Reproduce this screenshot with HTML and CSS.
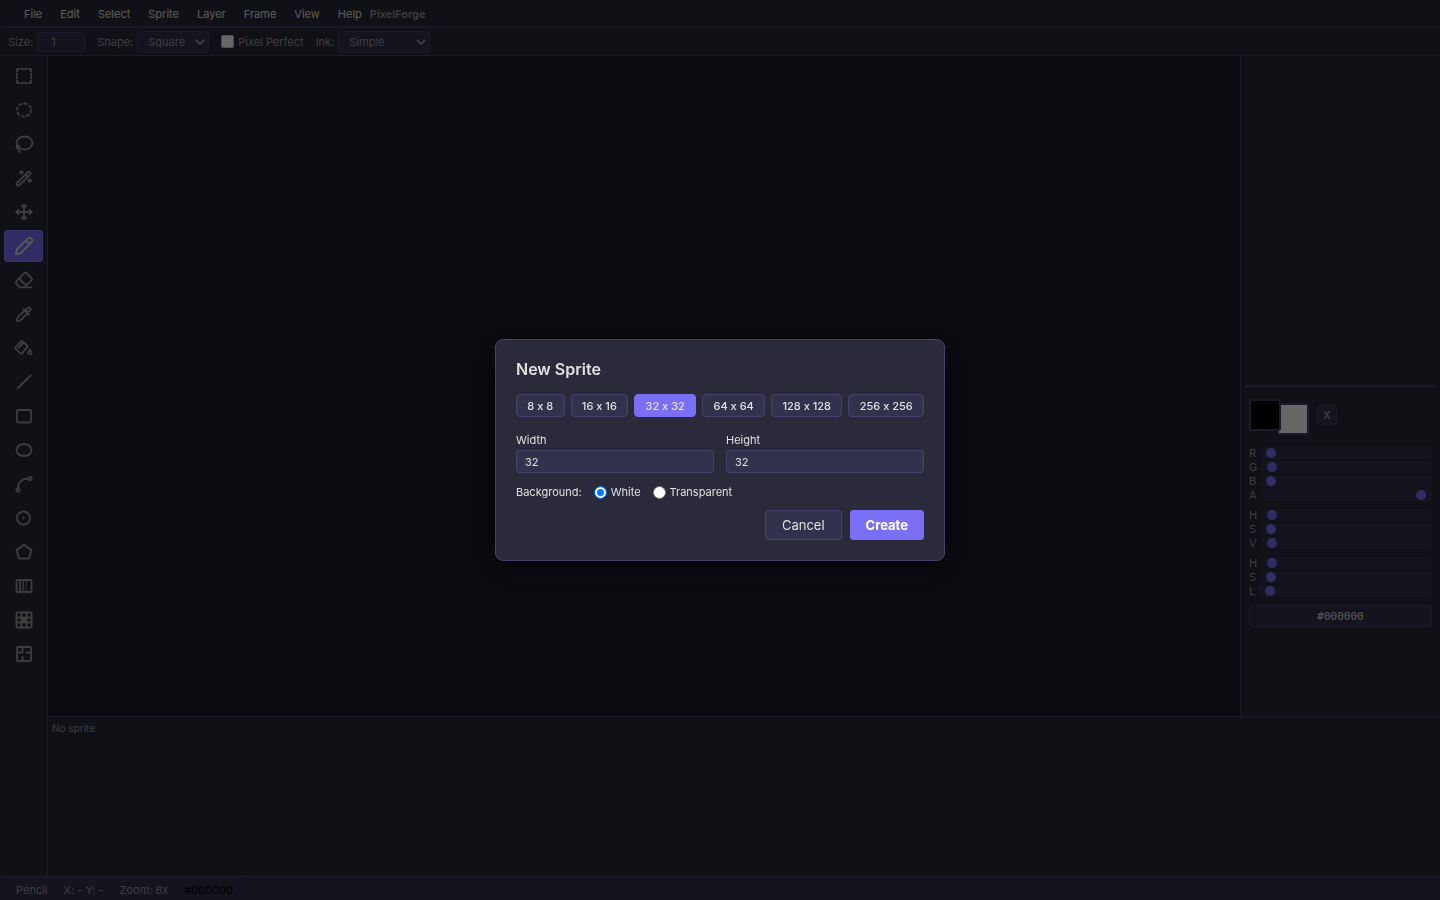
FILE: index.html
```html
<!DOCTYPE html>
<html lang="en">
<head>
    <meta charset="UTF-8">
    <meta name="viewport" content="width=device-width, initial-scale=1.0">
    <title>PixelForge</title>
    <link rel="stylesheet" href="styles.css">
</head>
<body>
    <div class="app">
        <header class="menubar">
            <nav class="menus">
                <button type="button">File</button>
                <button type="button">Edit</button>
                <button type="button">Select</button>
                <button type="button">Sprite</button>
                <button type="button">Layer</button>
                <button type="button">Frame</button>
                <button type="button">View</button>
                <button type="button">Help</button>
                <span class="brand">PixelForge</span>
            </nav>
        </header>

        <div class="options">
            <div class="option">
                <label for="brushSize">Size:</label>
                <input type="text" id="brushSize" class="size-input" value="1">
            </div>
            <div class="option">
                <label for="brushShape">Shape:</label>
                <span class="select-wrap">
                    <select id="brushShape" class="shape-select"><option>Square</option><option>Circle</option></select>
                    <svg class="chevron" viewBox="0 0 10 6"><path d="M1 1l4 4 4-4"/></svg>
                </span>
            </div>
            <div class="option">
                <input type="checkbox" id="pixelPerfect" class="check">
                <label for="pixelPerfect">Pixel Perfect</label>
            </div>
            <div class="option">
                <label for="ink">Ink:</label>
                <span class="select-wrap">
                    <select id="ink" class="ink-select"><option>Simple</option><option>Lock Alpha</option></select>
                    <svg class="chevron" viewBox="0 0 10 6"><path d="M1 1l4 4 4-4"/></svg>
                </span>
            </div>
        </div>

        <aside class="tools">
            <button type="button" aria-label="Rectangle select">
                <svg viewBox="0 0 20 20"><path d="M5 3H4a1 1 0 0 0-1 1v1M15 3h1a1 1 0 0 1 1 1v1M5 17H4a1 1 0 0 1-1-1v-1M15 17h1a1 1 0 0 0 1-1v-1M7.500 3h1.500M11 3h1.500M7.500 17h1.500M11 17h1.500M3 7.500v1.500M3 11v1.500M17 7.500v1.500M17 11v1.500"/></svg>
            </button>
            <button type="button" aria-label="Ellipse select">
                <svg viewBox="0 0 20 20"><ellipse cx="10" cy="10" rx="7" ry="6.500" stroke-dasharray="2.300 3"/></svg>
            </button>
            <button type="button" aria-label="Lasso">
                <svg viewBox="0 0 20 20"><ellipse cx="10.500" cy="9" rx="8" ry="6.500"/><circle cx="4" cy="13" r="1.500"/><path d="M4 14.500c0 1.500.8 2.800 2 3.500"/></svg>
            </button>
            <button type="button" aria-label="Magic wand">
                <svg viewBox="0 0 20 20"><path d="M2.800 15.200L14.200 3.800a1 1 0 0 1 1.400 0l.9.9a1 1 0 0 1 0 1.400L5.100 17.500a1 1 0 0 1-1.400 0l-.9-.9a1 1 0 0 1 0-1.400zM11.500 6.500l2.300 2.300M7.500 2.800v3M6 4.300h3M15.700 11v3M14.200 12.500h3"/></svg>
            </button>
            <button type="button" aria-label="Move">
                <svg viewBox="0 0 20 20"><path d="M10 2.500v15M2.500 10h15M7.800 4.500L10 2.300l2.200 2.200M7.800 15.500L10 17.700l2.200-2.200M4.500 7.800L2.300 10l2.200 2.200M15.500 7.800l2.200 2.200-2.200 2.200"/></svg>
            </button>
            <button type="button" class="active" aria-label="Pencil">
                <svg viewBox="0 0 20 20"><path d="M1.800 18.200l1-4.700L13.700 2.600a2.500 2.500 0 0 1 3.700 0 2.500 2.500 0 0 1 0 3.700L6.500 17.200zM12 4.300L15.700 8"/></svg>
            </button>
            <button type="button" aria-label="Eraser">
                <svg viewBox="0 0 20 20"><path d="M6 17.300l-3.700-3.700a1.500 1.500 0 0 1 0-2.100L10.400 3a1.500 1.500 0 0 1 2.100 0l5.100 5.100a1.500 1.500 0 0 1 0 2.100l-7.100 7.100M17.500 17.300H6M5 8.500l7.200 7"/></svg>
            </button>
            <button type="button" aria-label="Eyedropper">
                <svg viewBox="0 0 20 20"><path d="M10.500 6.800l-6.600 6.600c-.8.800-1 2-1 3.700 1.700.1 2.900-.2 3.700-1l6.600-6.600M9.500 5l5.500 5.500M11.500 7l2.300-3.300a1.800 1.800 0 0 1 2.500 2.500L13 8.500"/></svg>
            </button>
            <button type="button" aria-label="Paint bucket">
                <svg viewBox="0 0 20 20"><path d="M7.800 2.700l5.400 4.800a1 1 0 0 1 .1 1.400l-5 6.200a1.500 1.500 0 0 1-2.100.1l-4.200-3.900a1.500 1.500 0 0 1-.1-2.100zM9.500 4.200L4.800 9.800"/><path d="M15.800 11.500c1.200 1.500 1.700 2.300 1.700 3a1.700 1.700 0 0 1-3.400 0c0-.7.500-1.500 1.700-3z"/></svg>
            </button>
            <button type="button" aria-label="Line">
                <svg viewBox="0 0 20 20"><path d="M3.500 16.500l13-13"/></svg>
            </button>
            <button type="button" aria-label="Rectangle">
                <svg viewBox="0 0 20 20"><rect x="3" y="4" width="14" height="12.500" rx="1"/></svg>
            </button>
            <button type="button" aria-label="Ellipse">
                <svg viewBox="0 0 20 20"><ellipse cx="10" cy="10" rx="7.500" ry="6"/></svg>
            </button>
            <button type="button" aria-label="Curve">
                <svg viewBox="0 0 20 20"><circle cx="4" cy="16" r="1.700"/><circle cx="16" cy="4.500" r="1.700"/><path d="M4 14.300C4 8.500 8 4.500 14.300 4.500"/></svg>
            </button>
            <button type="button" aria-label="Circle">
                <svg viewBox="0 0 20 20"><circle cx="9.500" cy="10" r="6.500"/><circle class="solid" cx="9.500" cy="10" r="1.200"/></svg>
            </button>
            <button type="button" aria-label="Polygon">
                <svg viewBox="0 0 20 20"><path d="M10 2.700l7.500 5.500-2.500 8.300H5L2.500 8.200z"/></svg>
            </button>
            <button type="button" aria-label="Gradient">
                <svg viewBox="0 0 20 20"><rect x="2.500" y="4" width="15" height="12" rx="1"/><path d="M6 4v12"/><path d="M9 4v12" opacity=".7"/><path d="M12 4v12" opacity=".4"/></svg>
            </button>
            <button type="button" aria-label="Tilemap">
                <svg viewBox="0 0 20 20"><rect x="2.500" y="2.500" width="15" height="15" rx="1"/><path d="M7.500 2.500v15M12.500 2.500v15M2.500 7.500h15M2.500 12.500h15"/><rect class="solid" x="7.500" y="7.500" width="5" height="5"/></svg>
            </button>
            <button type="button" aria-label="Slice">
                <svg viewBox="0 0 20 20"><rect x="3" y="3" width="14" height="14" rx="1"/><path d="M8.500 3v5.500H3M17 8.500h-4.500M8.500 17v-4"/></svg>
            </button>
        </aside>

        <main class="canvas"></main>

        <aside class="panel">
            <div class="palette"></div>
            <div class="color-picker">
                <div class="swatches">
                    <button type="button" class="swatch foreground" aria-label="Foreground color"></button>
                    <button type="button" class="swatch background" aria-label="Background color"></button>
                    <button type="button" class="swap">X</button>
                </div>
                <div class="sliders">
                    <div class="slider"><label for="rgbR">R</label><input type="range" id="rgbR" min="0" max="255" value="0"></div>
                    <div class="slider"><label for="rgbG">G</label><input type="range" id="rgbG" min="0" max="255" value="0"></div>
                    <div class="slider"><label for="rgbB">B</label><input type="range" id="rgbB" min="0" max="255" value="0"></div>
                    <div class="slider"><label for="rgbA">A</label><input type="range" id="rgbA" min="0" max="255" value="255"></div>
                </div>
                <div class="sliders">
                    <div class="slider"><label for="hsvH">H</label><input type="range" id="hsvH" min="0" max="360" value="0"></div>
                    <div class="slider"><label for="hsvS">S</label><input type="range" id="hsvS" min="0" max="100" value="0"></div>
                    <div class="slider"><label for="hsvV">V</label><input type="range" id="hsvV" min="0" max="100" value="0"></div>
                </div>
                <div class="sliders">
                    <div class="slider"><label for="hslH">H</label><input type="range" id="hslH" min="0" max="360" value="0"></div>
                    <div class="slider"><label for="hslS">S</label><input type="range" id="hslS" min="0" max="100" value="0"></div>
                    <div class="slider"><label for="hslL">L</label><input type="range" id="hslL" min="0" max="100" value="0"></div>
                </div>
                <input type="text" class="hex" value="#000000" aria-label="Hex color">
            </div>
        </aside>

        <section class="timeline">No sprite</section>

        <footer class="statusbar">
            <div class="status">
                <span>Pencil</span>
                <span>X: - Y: -</span>
                <span>Zoom: 8x</span>
                <span class="status-color">#000000</span>
            </div>
        </footer>
    </div>

    <div class="overlay">
        <form class="dialog" role="dialog" aria-labelledby="dialogTitle">
            <h2 id="dialogTitle">New Sprite</h2>
            <div class="presets">
                <button type="button">8 x 8</button>
                <button type="button">16 x 16</button>
                <button type="button" class="active">32 x 32</button>
                <button type="button">64 x 64</button>
                <button type="button">128 x 128</button>
                <button type="button">256 x 256</button>
            </div>
            <div class="fields">
                <div class="field">
                    <label for="spriteWidth">Width</label>
                    <input type="text" id="spriteWidth" value="32">
                </div>
                <div class="field">
                    <label for="spriteHeight">Height</label>
                    <input type="text" id="spriteHeight" value="32">
                </div>
            </div>
            <div class="background-row">
                <span>Background:</span>
                <label><input type="radio" name="background" checked>White</label>
                <label><input type="radio" name="background">Transparent</label>
            </div>
            <div class="actions">
                <button type="button" class="cancel">Cancel</button>
                <button type="button" class="create">Create</button>
            </div>
        </form>
    </div>

    <script>
        // Preset buttons fill in the width and height
        const presets = document.querySelectorAll('.presets button');
        presets.forEach(function(button) {
            button.addEventListener('click', function() {
                const size = button.textContent.split(' x ');
                document.getElementById('spriteWidth').value = size[0];
                document.getElementById('spriteHeight').value = size[1];
                presets.forEach(b => b.classList.remove('active'));
                button.classList.add('active');
            });
        });
    </script>
</body>
</html>
```
FILE: styles.css
```css
:root {
    --bg: #201c2a;
    --panel: #2a2c38;
    --surface: #33324c;
    --border: #44426a;
    --accent: #7c6ff7;
    --text: #e0e0e0;
    --muted: #9898a0;
}
* {
    box-sizing: border-box;
}
body {
    margin: 0;
    background: var(--bg);
    color: var(--text);
    font-family: Inter, "Liberation Sans", sans-serif;
    font-size: 11px;
    line-height: 14px;
    font-variant-ligatures: no-contextual; /* keeps "32 x 32" from getting a multiply sign */
    overflow: hidden;
}
button, input, select {
    font: inherit;
    font-variant-ligatures: inherit;
    color: inherit;
    margin: 0;
}
button {
    cursor: pointer;
}
.app {
    display: grid;
    grid-template-columns: 48px 1fr 200px;
    grid-template-rows: 28px 28px 1fr 160px 24px;
    height: 100vh;
}

/* Menu bar */
.menubar {
    grid-column: 1 / -1;
    display: flex;
    padding: 0 8px;
    background: var(--panel);
    border-bottom: 1px solid var(--border);
}
.menus {
    display: flex;
    align-items: center;
    gap: 2px;
    padding: 2px 8px 0;
    border-bottom: 1px solid var(--border);
}
.menus button {
    padding: 4px 8px;
    border: 0;
    background: none;
}
.menus .brand {
    color: var(--muted);
    font-weight: 600;
    margin-left: -2px;
}

/* Tool options */
.options {
    grid-column: 1 / -1;
    display: flex;
    align-items: center;
    gap: 12px;
    padding: 0 8px;
    background: var(--panel);
    border-bottom: 1px solid var(--border);
    color: var(--muted);
}
.option {
    display: flex;
    align-items: center;
    gap: 4px;
}
.size-input,
.option select {
    height: 22px;
    border: 1px solid var(--border);
    border-radius: 3px;
    background: var(--surface);
}
.size-input {
    width: 48px;
    height: 20px;
    padding: 0 13px;
}
.option select {
    appearance: none;
    padding: 0 10px;
}
.shape-select {
    width: 72px;
}
.ink-select {
    width: 92px;
}
.select-wrap {
    position: relative;
    display: flex;
}
.chevron {
    position: absolute;
    right: 4px;
    top: 8px;
    width: 10px;
    height: 6px;
    fill: none;
    stroke: var(--muted);
    stroke-width: 2;
    pointer-events: none;
}
.check {
    appearance: none;
    width: 13px;
    height: 13px;
    border: 1px solid #c0c0c0;
    border-radius: 2px;
    background: #fff;
}

/* Toolbox */
.tools {
    grid-row: 3 / 5;
    display: flex;
    flex-direction: column;
    gap: 2px;
    padding: 4px;
    background: var(--panel);
    border-right: 1px solid var(--border);
}
.tools button {
    display: flex;
    align-items: center;
    justify-content: center;
    height: 32px;
    padding: 0;
    border: 1px solid transparent;
    border-radius: 3px;
    background: none;
    color: var(--muted);
}
.tools button.active {
    background: var(--accent);
    border-color: #8c80ff;
    color: var(--text);
}
.tools svg {
    width: 20px;
    height: 20px;
    fill: none;
    stroke: currentColor;
    stroke-width: 1.8;
    stroke-linecap: round;
    stroke-linejoin: round;
}
.tools .solid {
    fill: currentColor;
    stroke: none;
}

.canvas {
    background: var(--bg);
}

/* Color panel */
.panel {
    display: flex;
    flex-direction: column;
    padding: 4px;
    background: var(--panel);
    border-left: 1px solid var(--border);
}
.palette {
    height: 327px;
    border-bottom: 2px solid var(--border);
}
.color-picker {
    display: flex;
    flex-direction: column;
    gap: 8px;
    padding: 12px 4px;
}
.swatches {
    display: flex;
    height: 40px;
}
.swatch {
    width: 32px;
    height: 32px;
    padding: 0;
    border: 2px solid var(--border);
    border-radius: 2px;
}
.foreground {
    z-index: 1;
    background: #000;
}
.background {
    margin: 4px 0 0 -4px;
    background: #fff;
}
.swap {
    width: 20px;
    height: 20px;
    margin: 6px 0 0 8px;
    padding: 0;
    border: 1px solid var(--border);
    border-radius: 3px;
    background: var(--surface);
    color: var(--muted);
    font-size: 10px;
    font-weight: 700;
}
.sliders {
    display: flex;
    flex-direction: column;
    gap: 2px;
}
.slider {
    display: flex;
    align-items: center;
    gap: 4px;
    height: 12px;
    color: var(--muted);
}
.slider input {
    appearance: none;
    flex: 1;
    min-width: 0;
    height: 12px;
    padding: 0 6px;
    background: var(--surface);
    border-radius: 2px;
}
.slider input::-webkit-slider-thumb {
    appearance: none;
    width: 10px;
    height: 10px;
    border-radius: 50%;
    background: var(--accent);
}
.hex {
    width: 100%;
    height: 22px;
    padding: 0;
    border: 1px solid var(--border);
    border-radius: 3px;
    background: var(--surface);
    font-family: "DejaVu Sans Mono", monospace;
    text-align: center;
}

.timeline {
    grid-column: 2 / -1;
    padding: 4px;
    background: var(--panel);
    border-top: 1px solid var(--border);
    color: var(--muted);
    font-size: 10px;
}

/* Status bar */
.statusbar {
    grid-column: 1 / -1;
    display: flex;
    padding: 0 8px;
    background: var(--surface);
    border-top: 1px solid var(--border);
    color: var(--muted);
}
.status {
    display: flex;
    align-items: center;
    gap: 16px;
    padding: 2px 8px 0;
    border-top: 1px solid var(--border);
}
.status-color {
    color: #000;
}

/* New sprite dialog */
.overlay {
    position: fixed;
    inset: 0;
    z-index: 10;
    display: flex;
    align-items: center;
    justify-content: center;
    background: rgba(0, 0, 0, 0.6);
}
.dialog {
    width: 450px;
    padding: 20px;
    border: 1px solid var(--border);
    border-radius: 8px;
    background: #2a2a3a;
    box-shadow: 0 8px 32px rgba(0, 0, 0, 0.5);
}
.dialog h2 {
    margin: 0 0 16px;
    font-size: 16px;
    line-height: 18px;
    font-weight: 600;
}
.presets {
    display: flex;
    gap: 6px;
    margin-bottom: 16px;
}
.presets button {
    flex: auto;
    height: 23px;
    padding: 0;
    border: 1px solid var(--border);
    border-radius: 4px;
    background: var(--surface);
    font-weight: 500;
}
.presets button.active {
    background: var(--accent);
    border-color: var(--accent);
}
.fields {
    display: flex;
    gap: 12px;
    margin-bottom: 12px;
}
.field {
    flex: 1;
    display: flex;
    flex-direction: column;
    gap: 3px;
}
.field input {
    width: 100%;
    height: 23px;
    padding: 0 8px;
    border: 1px solid var(--border);
    border-radius: 3px;
    background: var(--surface);
}
.background-row {
    display: flex;
    align-items: center;
    gap: 12px;
    margin-bottom: 11px;
}
.background-row label {
    display: flex;
    align-items: center;
    gap: 4px;
}
.background-row input {
    appearance: none;
    width: 13px;
    height: 13px;
    border: 1px solid #777;
    border-radius: 50%;
    background: #fff;
}
.background-row input:checked {
    border: 1px solid #0075ff;
    background: #0075ff;
    box-shadow: inset 0 0 0 2px #fff;
}
.actions {
    display: flex;
    justify-content: flex-end;
    gap: 8px;
}
.actions button {
    height: 30px;
    padding: 0 16px;
    border: 1px solid var(--border);
    border-radius: 3px;
    background: var(--surface);
    font-size: 13px;
}
.actions .create {
    padding: 0 15px;
    border-color: var(--accent);
    background: var(--accent);
    color: #fff;
    font-weight: 700;
}
```
